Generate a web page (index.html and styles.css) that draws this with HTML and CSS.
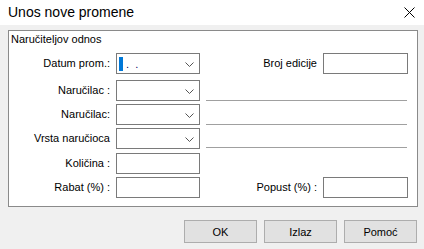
FILE: index.html
```html
<!DOCTYPE html>
<html lang="sr">
<head>
    <meta charset="UTF-8">
    <title>Unos nove promene</title>
    <link rel="stylesheet" href="styles.css">
</head>
<body>
    <div class="window">
        <div class="titlebar">
            <span class="title">Unos nove promene</span>
            <svg class="close" width="11" height="11" viewBox="0 0 11 11">
                <path d="M0.5 0.5 L10.5 10.5 M10.5 0.5 L0.5 10.5" stroke="#000" stroke-width="1" fill="none"/>
            </svg>
        </div>

        <div class="client">
            <div class="groupbox">
                <div class="legend">Naručiteljov odnos</div>

                <div class="form">
                    <label class="lbl">Datum prom.:</label>
                    <div class="combo">
                        <span class="date-value"><span class="caret"></span><span class="dots">.&nbsp;&nbsp;.</span></span>
                        <svg class="chevron" width="9" height="5" viewBox="0 0 9 5"><polyline points="0.5,0.5 4.5,4.5 8.5,0.5" fill="none" stroke="#555"/></svg>
                    </div>
                    <div class="right-field">
                        <label class="lbl">Broj edicije</label>
                        <div class="textbox"></div>
                    </div>

                    <label class="lbl">Naručilac :</label>
                    <div class="combo">
                        <svg class="chevron" width="9" height="5" viewBox="0 0 9 5"><polyline points="0.5,0.5 4.5,4.5 8.5,0.5" fill="none" stroke="#555"/></svg>
                    </div>
                    <div class="line"></div>

                    <label class="lbl">Naručilac:</label>
                    <div class="combo">
                        <svg class="chevron" width="9" height="5" viewBox="0 0 9 5"><polyline points="0.5,0.5 4.5,4.5 8.5,0.5" fill="none" stroke="#555"/></svg>
                    </div>
                    <div class="line"></div>

                    <label class="lbl">Vrsta naručioca</label>
                    <div class="combo">
                        <svg class="chevron" width="9" height="5" viewBox="0 0 9 5"><polyline points="0.5,0.5 4.5,4.5 8.5,0.5" fill="none" stroke="#555"/></svg>
                    </div>
                    <div class="line line-short"></div>

                    <label class="lbl">Količina :</label>
                    <div class="textbox"></div>
                    <div></div>

                    <label class="lbl">Rabat (%) :</label>
                    <div class="textbox"></div>
                    <div class="right-field">
                        <label class="lbl">Popust (%) :</label>
                        <div class="textbox"></div>
                    </div>
                </div>
            </div>

            <div class="buttons">
                <button class="btn">OK</button>
                <button class="btn">Izlaz</button>
                <button class="btn">Pomoć</button>
            </div>
        </div>
    </div>
</body>
</html>
```

FILE: styles.css
```css
html, body {
    margin: 0;
    padding: 0;
}

body {
    width: 424px;
    height: 249px;
    overflow: hidden;
    font-family: "Liberation Sans", Arial, sans-serif;
    font-size: 11px;
    color: #000;
    background-color: #f0f0f0;
}

.window {
    width: 424px;
    height: 249px;
}

.titlebar {
    height: 25px;
    background-color: #fff;
    display: flex;
    align-items: center;
    justify-content: space-between;
    padding: 0 8px 0 8px;
    box-sizing: border-box;
}

.title {
    font-size: 14px;
    margin-top: -1px;
}

.close {
    margin-right: 1px;
}

.client {
    padding-top: 5px;
}

.groupbox {
    margin-left: 8px;
    width: 410px;
    height: 177px;
    box-sizing: border-box;
    border: 1px solid #8a8a8a;
    background-color: #fff;
}

.legend {
    padding-left: 2px;
    line-height: 16px;
}

.form {
    display: grid;
    grid-template-columns: 101px 84px 201px;
    grid-template-rows: 27px 24px 24px 25px 24px 21px;
    column-gap: 6px;
    margin-top: 6px;
}

.lbl {
    text-align: right;
    line-height: 21px;
    height: 21px;
    white-space: nowrap;
}

.combo,
.textbox {
    height: 21px;
    box-sizing: border-box;
    border: 1px solid #7a7a7a;
    background-color: #fff;
}

.combo {
    display: flex;
    align-items: center;
    justify-content: space-between;
    padding: 0 5px 0 2px;
}

.chevron {
    margin-left: auto;
    margin-top: 1px;
}

.date-value {
    display: flex;
    align-items: center;
}

.caret {
    width: 4px;
    height: 14px;
    background-color: #0078d7;
}

.dots {
    margin-left: 3px;
    line-height: 14px;
    color: #000060;
}

.right-field {
    display: flex;
    justify-content: flex-end;
    gap: 6px;
    height: 21px;
}

.right-field .textbox {
    width: 85px;
    margin-right: -1px;
}

.line {
    height: 21px;
    box-sizing: border-box;
    border-bottom: 1px solid #a0a0a0;
}

.line-short {
    height: 20px;
}

.buttons {
    display: flex;
    justify-content: flex-end;
    gap: 7px;
    padding-right: 7px;
    margin-top: 13px;
}

.btn {
    width: 73px;
    height: 23px;
    box-sizing: border-box;
    border: 1px solid #adadad;
    background-color: #e1e1e1;
    font-family: "Liberation Sans", Arial, sans-serif;
    font-size: 11px;
    color: #000;
    padding: 0;
}
```
